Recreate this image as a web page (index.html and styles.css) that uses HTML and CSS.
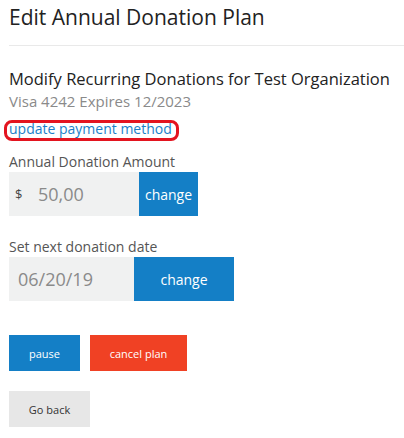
FILE: index.html
```html
<!DOCTYPE html>
<html>
<head>
<meta charset="utf-8">
<link rel="stylesheet" href="styles.css">
</head>
<body>
<div class="page">
  <h1 class="title">Edit Annual Donation Plan</h1>
  <hr class="divider">
  <h2 class="subtitle">Modify Recurring Donations for Test Organization</h2>
  <p class="card">Visa 4242 Expires 12/2023</p>
  <a class="update-link" href="#">update payment method</a>
  <label class="field-label">Annual Donation Amount</label>
  <div class="input-group amount-group">
    <div class="amount-field"><span class="currency">$</span><span class="amount-value">50,00</span></div>
    <button class="btn btn-blue amount-btn">change</button>
  </div>
  <label class="field-label date-label">Set next donation date</label>
  <div class="input-group date-group">
    <div class="date-field">06/20/19</div>
    <button class="btn btn-blue date-btn">change</button>
  </div>
  <div class="actions">
    <button class="btn btn-blue small-btn pause-btn">pause</button>
    <button class="btn btn-red small-btn cancel-btn">cancel plan</button>
  </div>
  <button class="btn btn-gray small-btn back-btn">Go back</button>
</div>
</body>
</html>
```
FILE: styles.css
```css
* { box-sizing: border-box; }
html, body { margin: 0; padding: 0; background: #fff; }
body { font-family: "Open Sans", "Liberation Sans", sans-serif; color: #222; }
.page { padding: 0 0 0 9px; }
.title { margin: 0; padding-top: 3px; font-size: 21px; font-weight: 400; line-height: 28px; color: #222; }
.divider { margin: 14px 0 0 0; border: 0; border-top: 1px solid #e9e9e9; height: 0; }
.subtitle { margin: 21px 0 0 0; font-size: 16.5px; font-weight: 400; line-height: 24px; color: #222; }
.card { margin: 0; font-size: 15px; line-height: 20px; color: #8a8a8a; }
.update-link { display: block; width: fit-content; margin: 9px 0 0 -5px; padding: 0 4px 4px 2px; font-size: 14px; line-height: 11px; color: #1a7fc9; text-decoration: none; border: 3px solid #e3141f; border-radius: 8px; }
.field-label { display: block; margin-top: 11px; font-size: 14px; line-height: 19px; color: #555; }
.input-group { display: flex; height: 44px; margin-top: 1px; }
.amount-field { width: 130px; background: #f0f1f1; display: flex; align-items: center; }
.currency { font-size: 13px; color: #444; margin-left: 6px; width: 23px; }
.amount-value { font-size: 18px; color: #8a8a8a; }
.btn { border: 0; margin: 0; font-family: "Open Sans", "Liberation Sans", sans-serif; color: #fff; cursor: pointer; padding: 0; }
.btn-blue { background: #147fc6; }
.btn-red { background: #f04124; }
.btn-gray { background: #e7e7e7; color: #333; }
.amount-btn { width: 59px; font-size: 14px; }
.date-label { margin-top: 21px; }
.date-field { width: 125px; background: #f0f1f1; display: flex; align-items: center; padding-left: 9px; font-size: 18px; color: #8a8a8a; }
.date-btn { width: 100px; font-size: 14px; }
.actions { display: flex; gap: 10px; margin-top: 34px; }
.small-btn { height: 36px; font-size: 11px; }
.pause-btn { width: 71px; }
.cancel-btn { width: 97px; }
.back-btn { display: block; width: 81px; margin-top: 20px; }
```
